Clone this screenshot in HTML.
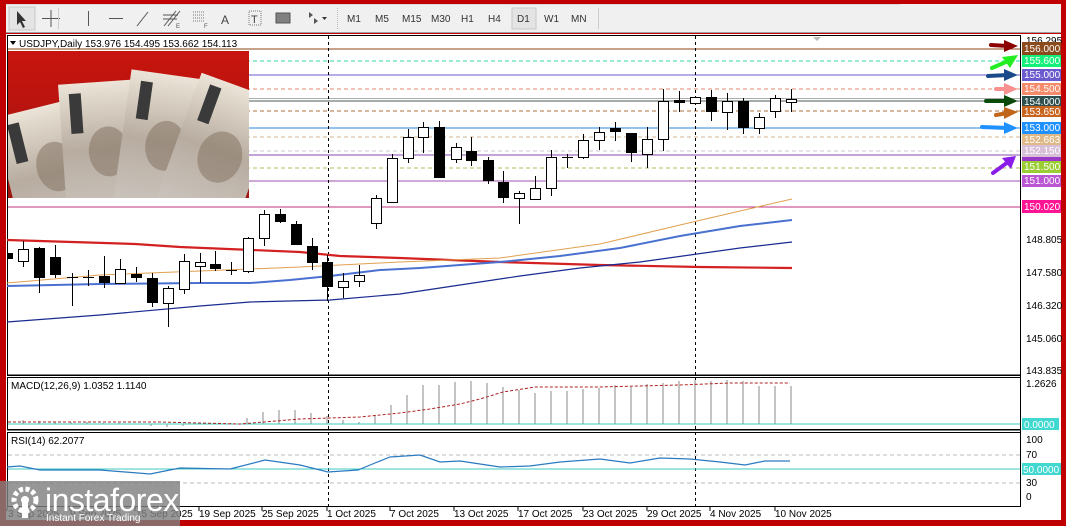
<!DOCTYPE html>
<html><head><meta charset="utf-8"><style>
html,body{margin:0;padding:0;background:#c00000;}
body{width:1066px;height:526px;overflow:hidden;position:relative;font-family:"Liberation Sans",sans-serif;}
svg text{font-family:"Liberation Sans",sans-serif;}
</style></head><body>
<svg width="1066" height="526" viewBox="0 0 1066 526" xmlns="http://www.w3.org/2000/svg" style="position:absolute;left:0;top:0">
<rect x="0" y="0" width="1066" height="526" fill="#c00000"/>
<!-- toolbar -->
<rect x="6" y="4" width="1055" height="29" fill="#f0f0f0"/>
<line x1="6" y1="4.5" x2="900" y2="4.5" stroke="#d8d8d8"/>
<line x1="6" y1="32.5" x2="1061" y2="32.5" stroke="#a0a0a0"/>
<rect x="9" y="7" width="26" height="23" fill="#e4e4e4" stroke="#c8c8c8"/>
<path d="M17 11 L17 25 L20 22 L23 28 L25 27 L22 21 L26 21 Z" fill="#333"/>
<path d="M51 10 V27 M42 18.5 H60" stroke="#555" stroke-width="1"/>
<line x1="58.5" y1="8" x2="58.5" y2="29" stroke="#ccc"/>
<line x1="88.5" y1="11" x2="88.5" y2="26" stroke="#555"/>
<line x1="109" y1="18.5" x2="123" y2="18.5" stroke="#555"/>
<line x1="137" y1="26" x2="148" y2="12" stroke="#555"/>
<path d="M164 26 L176 11 M168 26 L180 11 M163 19 H177 M163 15 H178" stroke="#555"/>
<text x="176" y="28" font-size="6" fill="#555">E</text>
<path d="M193 12 H205 M193 15 H205 M193 18 H205 M193 21 H205" stroke="#777" stroke-dasharray="1 1"/>
<text x="204" y="28" font-size="6" fill="#555">F</text>
<text x="221" y="24" font-size="12" fill="#444">A</text>
<rect x="249" y="11" width="12" height="14" fill="none" stroke="#777" stroke-dasharray="1 1"/>
<text x="251" y="23" font-size="11" fill="#444">T</text>
<rect x="276" y="13" width="14" height="10" fill="#808080" stroke="#555"/>
<path d="M309 12 l4 3 l-4 3z M314 18 l4 3 l-4 3z" fill="#555"/>
<path d="M322 17 h5 l-2.5 3z" fill="#333"/>
<line x1="337.5" y1="8" x2="337.5" y2="29" stroke="#bbb" stroke-dasharray="1 1"/>
<g font-size="10" fill="#333">
<text x="347" y="22">M1</text><text x="375" y="22">M5</text><text x="402" y="22">M15</text><text x="431" y="22">M30</text>
<text x="461" y="22">H1</text><text x="488" y="22">H4</text>
<rect x="512" y="8" width="24" height="21" fill="#e4e4e4" stroke="#c8c8c8"/>
<text x="517" y="22">D1</text><text x="544" y="22">W1</text><text x="571" y="22">MN</text>
</g>
<line x1="598.5" y1="8" x2="598.5" y2="29" stroke="#ccc"/>

<!-- chart area white -->
<rect x="6" y="34" width="1055" height="486" fill="#fff"/>
<rect x="7.5" y="35.5" width="1013" height="340" fill="none" stroke="#000"/>
<rect x="7.5" y="377.5" width="1013" height="52" fill="none" stroke="#000"/>
<rect x="7.5" y="432.5" width="1013" height="74" fill="none" stroke="#000"/>
<line x1="7" y1="375" x2="1020" y2="375" stroke="#000"/>
<line x1="7" y1="430" x2="1020" y2="430" stroke="#000"/>
<path d="M813 37 l4 4 l4 -4z" fill="#bbb"/>

<!-- header -->
<path d="M10 41 h6 l-3 4z" fill="#000"/>
<text x="19" y="47" font-size="10" fill="#000">USDJPY,Daily  153.976 154.495 153.662 154.113</text>

<!-- horizontal levels -->
<line x1="8" y1="49" x2="1020" y2="49" stroke="#8b4513"/>
<line x1="8" y1="61" x2="1020" y2="61" stroke="#2ed8a0" stroke-dasharray="4 3"/>
<line x1="8" y1="75" x2="1020" y2="75" stroke="#6a5acd"/>
<line x1="8" y1="89" x2="1020" y2="89" stroke="#e08a6a" stroke-dasharray="4 3"/>
<line x1="8" y1="98.5" x2="1020" y2="98.5" stroke="#aaa"/>
<line x1="8" y1="101" x2="1020" y2="101" stroke="#4a5a5a"/>
<line x1="8" y1="111" x2="1020" y2="111" stroke="#b0703a" stroke-dasharray="4 3"/>
<line x1="8" y1="128" x2="1020" y2="128" stroke="#2a8ad8"/>
<line x1="8" y1="137" x2="1020" y2="137" stroke="#d2b48c" stroke-dasharray="4 3"/>
<line x1="8" y1="151" x2="1020" y2="151" stroke="#d0c0d0" stroke-dasharray="4 3"/>
<line x1="8" y1="155" x2="1020" y2="155" stroke="#8a4aa8"/>
<line x1="8" y1="168" x2="1020" y2="168" stroke="#b0c060" stroke-dasharray="4 3"/>
<line x1="8" y1="181" x2="1020" y2="181" stroke="#a050b0"/>
<line x1="8" y1="207" x2="1020" y2="207" stroke="#c03080"/>

<!-- vertical separators -->
<line x1="328.5" y1="36" x2="328.5" y2="510" stroke="#000" stroke-dasharray="3 3"/>
<line x1="695.5" y1="36" x2="695.5" y2="510" stroke="#000" stroke-dasharray="3 3"/>

<!-- photo -->
<defs>
<linearGradient id="bg" x1="0" y1="0" x2="0" y2="1"><stop offset="0" stop-color="#c8140e"/><stop offset="1" stop-color="#a01410"/></linearGradient>
<linearGradient id="nt" x1="0" y1="0" x2="0" y2="1"><stop offset="0" stop-color="#ece4d8"/><stop offset="0.45" stop-color="#b8aca0"/><stop offset="1" stop-color="#cfcac4"/></linearGradient>
<clipPath id="pc"><rect x="8" y="51" width="241" height="147"/></clipPath>
</defs>
<g clip-path="url(#pc)">
<rect x="8" y="51" width="241" height="147" fill="url(#bg)"/>
<g transform="rotate(-14 40 150)"><rect x="2" y="108" width="80" height="150" fill="url(#nt)"/><rect x="14" y="118" width="12" height="40" fill="#3a3a3a"/><ellipse cx="52" cy="170" rx="20" ry="25" fill="#857565" opacity="0.55"/></g>
<g transform="rotate(-4 100 140)"><rect x="62" y="82" width="72" height="150" fill="url(#nt)"/><rect x="72" y="92" width="12" height="40" fill="#3a3a3a"/><ellipse cx="108" cy="152" rx="20" ry="25" fill="#857565" opacity="0.55"/></g>
<g transform="rotate(8 160 140)"><rect x="122" y="74" width="70" height="150" fill="url(#nt)"/><rect x="133" y="84" width="12" height="38" fill="#3a3a3a"/><ellipse cx="166" cy="145" rx="20" ry="25" fill="#857565" opacity="0.55"/></g>
<g transform="rotate(20 215 150)"><rect x="176" y="82" width="84" height="150" fill="url(#nt)"/><rect x="188" y="90" width="12" height="38" fill="#3a3a3a"/><ellipse cx="222" cy="155" rx="22" ry="26" fill="#857565" opacity="0.55"/></g>
</g>

<!-- moving averages -->
<polyline fill="none" stroke="#d42020" stroke-width="2.2" points="7,240 40,241 135,244 180,247 300,252 340,256 400,258 500,262 600,265 700,267 792,268"/>
<polyline fill="none" stroke="#e0a050" stroke-width="1" points="7,283 100,275 200,271 300,267 400,262 500,258 600,244 680,225 740,211 792,199"/>
<polyline fill="none" stroke="#4a70d0" stroke-width="2" points="7,286 100,284 200,283 250,283 290,280 330,276 380,270 420,268 500,262 560,256 620,248 680,236 740,226 792,220"/>
<polyline fill="none" stroke="#1a2a90" stroke-width="1.2" points="7,322 100,315 200,306 250,302 330,300 400,294 460,285 520,276 580,268 640,262 690,255 740,248 792,242"/>

<!-- candles -->
<g stroke="#000" stroke-width="1">
<path d="M23.5 241V267M39.5 247V293M55.5 245V278M72.5 273V306M88.5 270V286M104.5 256V288M120.5 259V283M136.5 267V282M152.5 273V307M168.5 286V327M184.5 254V294M200.5 253V283M215.5 251V271M231.5 262V275M248.5 237V273M264.5 210V246M280.5 209V223M296.5 221V245M312.5 238V270M327.5 255V301M343.5 273V298M359.5 265V287M376.5 195V229M392.5 154V202M408.5 129V163M423.5 122V153M439.5 121V178M456.5 143V163M471.5 137V166M488.5 157V184M503.5 171V203M519.5 191V224M535.5 176V200M551.5 150V196M567.5 154V168M583.5 134V159M599.5 127V150M615.5 122V141M631.5 133V162M647.5 127V168M663.5 89V151M679.5 91V112M711.5 90V121M727.5 93V130M743.5 98V134M759.5 113V134M775.5 95V118M791.5 89V112"/>
<path d="M67 277.5H78M83 277.5H94M226 270.5H237M562 157.5H573"/>
</g>
<g stroke="#000" fill="#fff">
<rect x="18.5" y="249.5" width="10" height="12"/>
<rect x="115.5" y="269.5" width="10" height="14"/>
<rect x="163.5" y="288.5" width="10" height="15"/>
<rect x="179.5" y="261.5" width="10" height="28"/>
<rect x="195.5" y="262.5" width="10" height="4"/>
<rect x="243.5" y="238.5" width="10" height="33"/>
<rect x="259.5" y="214.5" width="10" height="24"/>
<rect x="338.5" y="281.5" width="10" height="6"/>
<rect x="354.5" y="275.5" width="10" height="6"/>
<rect x="371.5" y="198.5" width="10" height="25"/>
<rect x="387.5" y="158.5" width="10" height="44"/>
<rect x="403.5" y="137.5" width="10" height="21"/>
<rect x="418.5" y="127.5" width="10" height="10"/>
<rect x="451.5" y="147.5" width="10" height="12"/>
<rect x="514.5" y="193.5" width="10" height="5"/>
<rect x="530.5" y="188.5" width="10" height="11"/>
<rect x="546.5" y="157.5" width="10" height="31"/>
<rect x="578.5" y="140.5" width="10" height="17"/>
<rect x="594.5" y="132.5" width="10" height="8"/>
<rect x="642.5" y="139.5" width="10" height="15"/>
<rect x="658.5" y="101.5" width="10" height="38"/>
<rect x="690.5" y="97.5" width="10" height="6"/>
<rect x="722.5" y="101.5" width="10" height="11"/>
<rect x="754.5" y="117.5" width="10" height="11"/>
<rect x="770.5" y="98.5" width="10" height="13"/>
<rect x="786.5" y="99.5" width="10" height="3"/>
</g>
<g fill="#000">
<rect x="8" y="253" width="5" height="6"/>
<rect x="34" y="248" width="11" height="30"/>
<rect x="50" y="257" width="11" height="18"/>
<rect x="99" y="276" width="11" height="7"/>
<rect x="131" y="274" width="11" height="4"/>
<rect x="147" y="278" width="11" height="25"/>
<rect x="210" y="264" width="11" height="5"/>
<rect x="275" y="214" width="11" height="8"/>
<rect x="291" y="224" width="11" height="21"/>
<rect x="307" y="246" width="11" height="17"/>
<rect x="322" y="262" width="11" height="25"/>
<rect x="434" y="127" width="11" height="51"/>
<rect x="466" y="151" width="11" height="10"/>
<rect x="483" y="160" width="11" height="21"/>
<rect x="498" y="182" width="11" height="16"/>
<rect x="610" y="128" width="11" height="4"/>
<rect x="626" y="133" width="11" height="20"/>
<rect x="674" y="100" width="11" height="3"/>
<rect x="706" y="97" width="11" height="15"/>
<rect x="738" y="101" width="11" height="27"/>
</g>

<!-- arrows -->
<g stroke-linecap="round">
<line x1="991" y1="45" x2="1008" y2="46" stroke="#8b0000" stroke-width="4"/><path d="M1004 40 L1018 46 L1004 52Z" fill="#8b0000"/>
<line x1="992" y1="68" x2="1008" y2="61" stroke="#22ee22" stroke-width="4"/><path d="M1002 57 L1018 55 L1010 68Z" fill="#22ee22"/>
<line x1="988" y1="76" x2="1008" y2="75" stroke="#1a4a8a" stroke-width="4"/><path d="M1004 69 L1018 75 L1004 81Z" fill="#1a4a8a"/>
<line x1="996" y1="89" x2="1008" y2="89" stroke="#f89090" stroke-width="4"/><path d="M1004 83 L1018 89 L1004 95Z" fill="#f89090"/>
<line x1="986" y1="101" x2="1008" y2="101" stroke="#0a4a0a" stroke-width="4"/><path d="M1004 95 L1018 101 L1004 107Z" fill="#0a4a0a"/>
<line x1="996" y1="115" x2="1008" y2="113" stroke="#c0651a" stroke-width="4"/><path d="M1004 107 L1018 112 L1004 119Z" fill="#c0651a"/>
<line x1="982" y1="127" x2="1008" y2="128" stroke="#1e90ff" stroke-width="4"/><path d="M1004 122 L1018 128 L1004 134Z" fill="#1e90ff"/>
<line x1="993" y1="173" x2="1008" y2="162" stroke="#8a1ee8" stroke-width="4"/><path d="M1002 158 L1016 156 L1011 169Z" fill="#8a1ee8"/>
</g>

<!-- right axis -->
<line x1="1020.5" y1="35" x2="1020.5" y2="507" stroke="#000"/>
<g font-size="10" fill="#000">
<text x="1026" y="44">156.295</text>
<text x="1026" y="243">148.805</text>
<text x="1026" y="276">147.580</text>
<text x="1026" y="309">146.320</text>
<text x="1026" y="342">145.060</text>
<text x="1026" y="374">143.835</text>
<text x="1026" y="387">1.2626</text>
<text x="1026" y="443">100</text>
<text x="1026" y="458">70</text>
<text x="1026" y="486">30</text>
<text x="1026" y="500">0</text>
</g>
<g font-size="10" fill="#fff">
<rect x="1022" y="42" width="39" height="13" fill="#8b4a1c"/><text x="1024" y="52">156.000</text>
<rect x="1022" y="55" width="39" height="12" fill="#14f07a"/><text x="1024" y="64">155.600</text>
<rect x="1022" y="69" width="39" height="12" fill="#6a5acd"/><text x="1024" y="78">155.000</text>
<rect x="1022" y="83" width="39" height="12" fill="#f58b6a"/><text x="1024" y="92">154.500</text>
<rect x="1022" y="96" width="39" height="11" fill="#2f4f4f"/><text x="1024" y="105">154.000</text>
<rect x="1022" y="106" width="39" height="11" fill="#c8641e"/><text x="1024" y="115">153.650</text>
<rect x="1022" y="122" width="39" height="12" fill="#1e90ff"/><text x="1024" y="131">153.000</text>
<rect x="1022" y="134" width="39" height="11" fill="#deb887"/><text x="1024" y="143">152.663</text>
<rect x="1022" y="145" width="39" height="12" fill="#d8bfd8"/><text x="1024" y="154">152.150</text>
<rect x="1022" y="157" width="39" height="4" fill="#9a3ac8"/>
<rect x="1022" y="161" width="39" height="12" fill="#9acd32"/><text x="1024" y="170">151.500</text>
<rect x="1022" y="175" width="39" height="12" fill="#ba55d3"/><text x="1024" y="184">151.000</text>
<rect x="1022" y="200" width="39" height="13" fill="#ff1493"/><text x="1024" y="210">150.020</text>
<rect x="1022" y="418" width="37" height="12" fill="#40d8d0"/><text x="1024" y="428">0.0000</text>
<rect x="1022" y="463" width="39" height="12" fill="#40d8d0"/><text x="1023" y="473">50.0000</text>
</g>

<!-- MACD -->
<text x="11" y="389" font-size="10" fill="#000">MACD(12,26,9) 1.0352 1.1140</text>
<g stroke="#c4c4c4" stroke-width="2">
<path d="M23 424V420M39 424V421M55 424V422M71 424V422M87 424V422M103 424V423M119 424V423M151 424V426M167 424V427M183 424V426M215 424V423M231 424V423M247 424V418M263 424V412M279 424V410M295 424V410M311 424V413M327 424V416M343 424V420M359 424V422M375 424V415M391 424V405M407 424V395M423 424V385M439 424V385M455 424V382M471 424V381M487 424V383M503 424V387M519 424V390M535 424V393M551 424V391M567 424V391M583 424V389M599 424V388M615 424V385M631 424V387M647 424V384M663 424V383M679 424V381M695 424V380M711 424V381M727 424V380M743 424V381M759 424V386M775 424V386M791 424V386"/>
</g>
<line x1="8" y1="424" x2="1020" y2="424" stroke="#40c8c0"/>
<polyline fill="none" stroke="#b02020" stroke-dasharray="3 2" points="8,422 160,422 240,424 300,419 330,418 360,417 400,413 430,409 460,404 480,399 503,392 535,387 600,387 680,385 730,383 790,383"/>

<!-- RSI -->
<text x="11" y="444" font-size="10" fill="#000">RSI(14) 62.2077</text>
<line x1="8" y1="455" x2="1020" y2="455" stroke="#bbb" stroke-dasharray="4 3"/>
<line x1="8" y1="483" x2="1020" y2="483" stroke="#bbb" stroke-dasharray="4 3"/>
<line x1="8" y1="469" x2="1020" y2="469" stroke="#40c8c0"/>
<polyline fill="none" stroke="#2a7ac0" stroke-width="1.2" points="7,467 20,466 40,470 100,470 150,474 180,468 230,469 265,460 300,465 328,472 358,470 375,463 390,457 420,455 440,462 460,461 480,464 500,467 530,466 560,462 600,459 630,463 660,458 690,459 720,462 745,465 765,461 790,461"/>

<!-- date axis -->
<g stroke="#000"><path d="M7 507v4M70 507v4M135 507v4M199 507v4M262 507v4M327 507v4M390 507v4M454 507v4M518 507v4M583 507v4M647 507v4M710 507v4M775 507v4"/></g>
<g font-size="10" fill="#000">
<text x="8" y="517">3 Sep 2025</text><text x="70" y="517">9 Sep 2025</text><text x="136" y="517">15 Sep 2025</text>
<text x="199" y="517">19 Sep 2025</text><text x="262" y="517">25 Sep 2025</text><text x="327" y="517">1 Oct 2025</text>
<text x="390" y="517">7 Oct 2025</text><text x="454" y="517">13 Oct 2025</text><text x="518" y="517">17 Oct 2025</text>
<text x="583" y="517">23 Oct 2025</text><text x="647" y="517">29 Oct 2025</text><text x="710" y="517">4 Nov 2025</text>
<text x="775" y="517">10 Nov 2025</text>
</g>

<!-- logo -->
<rect x="0" y="481" width="180" height="45" fill="#808080" opacity="0.82"/>
<g fill="#fff">
<circle cx="25" cy="500" r="11" fill="none" stroke="#fff" stroke-width="5" stroke-dasharray="4 2.5"/>
<circle cx="25" cy="500" r="4"/>
<rect x="22" y="502" width="6" height="16"/>
<text x="45" y="511" font-size="32" letter-spacing="-0.5">instaforex</text>
<text x="46" y="521" font-size="10">Instant Forex Trading</text>
</g>
</svg>
</body></html>
